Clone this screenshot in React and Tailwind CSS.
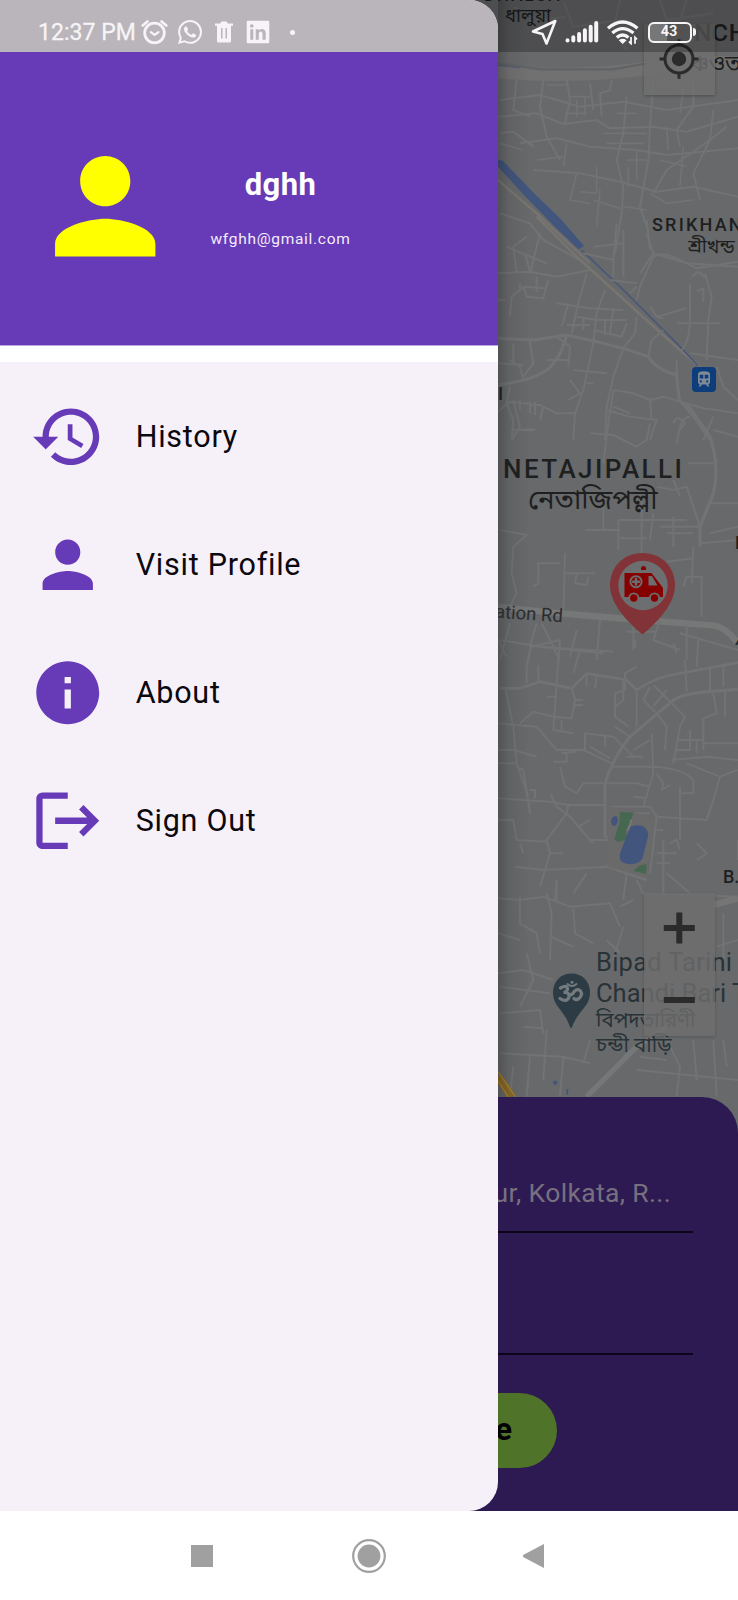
import React from "react";

const cx = "absolute leading-none whitespace-nowrap";

function MapCanvas() {
  return (
    <svg className="absolute inset-0" width="738" height="1140" viewBox="0 0 738 1140" fill="none">
      <defs>
        <linearGradient id="edge" x1="498" x2="530" y1="0" y2="0" gradientUnits="userSpaceOnUse">
          <stop offset="0" stopColor="#000" stopOpacity=".22" />
          <stop offset=".35" stopColor="#000" stopOpacity=".07" />
          <stop offset="1" stopColor="#000" stopOpacity="0" />
        </linearGradient>
      </defs>
      <rect width="738" height="1140" fill="#68696b" />

      <g transform="translate(480 0) scale(.33333)" stroke="#717374" strokeWidth="6" strokeLinejoin="round">
        <path d="M54 215 Q280 235 500 205 Q600 180 774 190" stroke="#717171" strokeWidth="40" />
        <path d="M54 190 L180 208 L400 208 L500 190" stroke="#616365" strokeWidth="7" />
        <path d="M54 196 L120 204" stroke="#4d5b73" strokeWidth="3" />
        <path d="M60 300 L180 285 L300 320 L430 305 L560 330 L774 300 M54 350 L170 340 L250 372 L350 360 L390 385 L520 380 L620 395 L774 350 M120 430 L230 415 L330 440 L470 450 L560 465 L774 445 M160 510 L300 520 L420 545 L530 575 L640 560 L774 590 M60 400 L100 395 L160 440" />
        <path d="M110 240 L100 330 L150 350 M190 240 L180 320 L200 410 L240 480 M260 235 L270 300 L255 370 M330 250 L340 330 M395 240 L390 270 L360 280 L365 350 M440 290 L430 400 L410 480 L430 560 L425 640 L405 760 M520 240 L510 380 L505 480 L480 620 L500 680 M640 240 L640 320 L590 390 M700 330 L690 420 L640 520 L660 600 M740 380 L690 420 L560 510 L520 580" />
        <path d="M200 255 H260 M270 290 H330 M255 340 H320 M290 300 V350 M315 290 V345 M410 340 H470 M370 400 H500 M380 430 H490 M440 480 H510 M445 500 V560 M470 450 V540 M350 500 V580 L300 575 M260 430 L250 500 M290 520 L270 600 L330 610 M340 600 L420 625 M360 570 L350 680 M170 480 L250 470 M60 430 L130 450 M540 250 L610 270 L600 340 M560 380 L565 450 M590 390 L600 440 M540 480 L620 500 M610 440 L600 560 M510 580 L560 610 L640 600 M430 620 L500 630" strokeWidth="5" />
        <path d="M100 20 L180 60 L260 50 M250 5 L280 80 L420 60 M420 0 L400 90 L440 150 M540 0 L560 60 L700 40 M620 0 L600 60" stroke="#6f7172" />
        <path d="M54 540 L170 640 L330 790" stroke="#787571" strokeWidth="7" />
        <path d="M54 500 L54 478 L70 484 L168 586 L240 655 L312 738 L296 748 L228 684 L138 592 Z" fill="#42557c" stroke="none" />
        <path d="M60 640 L150 670 L190 720 L300 780 M180 700 L150 820 M80 740 L200 790 M500 700 L520 760 L480 820 M520 760 L620 790 L774 800 M430 690 L430 830 M340 740 L430 730" />
      </g>

      <g transform="translate(490 220) scale(.33333)" stroke="#717374" strokeWidth="6" strokeLinejoin="round">
        <path d="M140 -10 L260 110 L480 310 L570 390 L630 440" stroke="#777571" strokeWidth="8" />
        <path d="M275 90 L400 210 L490 300 L560 370 L625 438" stroke="#42557c" strokeWidth="4" />
        <path d="M24 355 L130 360 L230 345 L320 365 L400 385 L475 410 Q500 450 560 465 L568 540 L620 600 L660 660" strokeWidth="9" />
        <path d="M24 495 Q130 480 170 450 Q210 420 230 345" strokeWidth="9" />
        <path d="M24 160 L120 155 L200 170 L300 150 M80 155 L70 80 L110 50 M120 155 L105 100 M60 290 L65 230 L100 200 L165 205 M24 240 L45 240 M100 200 L110 230 L160 235 L175 180 M90 190 V215 M140 170 V215" />
        <path d="M200 250 L300 265 L400 270 M290 160 L265 250 L245 340 M345 210 L320 280 L310 370 L280 510 L255 580 L250 660 M235 250 L215 320 M260 290 L320 300 L410 300 M230 315 H300 M310 330 L395 350 L410 310 M280 290 V330 M345 300 V345 M370 270 L360 340 M440 290 L435 340 L400 385 L370 470 L350 560 L345 660" />
        <path d="M440 240 L450 200 L490 110 Q520 95 560 115 L620 145 L744 125 M480 90 L470 0 M380 10 L370 120 L280 100 M370 120 L370 170 M440 200 L420 220 M360 180 L440 190 M645 160 L665 230 L655 300 L650 420 M600 190 V290 Q600 370 570 395 M500 290 L590 265 M605 170 L625 155 L650 175 M480 260 L500 290 L520 295 M560 310 H690 M620 215 L640 205 V245 M475 410 L485 360 L520 330" />
        <path d="M24 430 L100 435 M70 370 V430 M120 365 L130 430 L100 470 M60 420 L90 440 L100 480 M170 420 H240 M200 350 L240 380 L235 440 M250 450 L350 460 M240 480 L270 520 L235 540 M290 490 H310 M24 575 L60 545 L150 555 L200 580 L255 580 M90 540 V570 M120 545 V580 M135 545 V585 M60 500 L50 550 L70 600 L65 660 M70 630 L135 628 M370 510 L430 520 L480 540 L520 530 L570 545 L640 565 L744 580 M480 540 L485 600 M560 420 V500 M680 440 L700 500 L744 540 M600 400 L744 420 M570 620 Q580 590 600 590 M350 570 L420 590 L500 600 L480 660 M670 590 L640 660" />
      </g>

      <g transform="translate(480 340) scale(.33333)" stroke="#717374" strokeWidth="6" strokeLinejoin="round">
        <path d="M620 190 L690 290 Q720 380 700 460 L660 560 L660 620" strokeWidth="10" />
        <path d="M100 180 L120 260 L95 300 M110 270 H165 M190 200 L180 240 M330 280 L400 285 L470 320 L500 300 L510 250 M370 370 L385 250 L400 150 M400 200 L450 220 M600 260 L590 310 M580 250 Q590 220 615 250 L600 270 M625 370 H700 M700 270 L774 290 M690 490 H774 M530 440 L580 450 L620 440 M580 420 L600 470" />
        <path d="M60 570 L140 585 L100 620 L95 700 L110 760 L90 800 M315 570 H420 M370 500 L370 570 M415 540 V630 M415 540 H620 M485 480 V640 M520 520 L510 600 M540 560 H660 M580 530 V620 M420 595 H500 M560 580 H640 M620 440 L660 560 M660 610 L774 600 M640 620 L635 730 M170 670 H240 M175 670 V730 L160 740 M255 640 L250 830 M250 700 H345 M290 700 L285 730 M285 730 L320 735 L325 710 M610 740 L620 710 H665 V830 M690 580 L774 560 M560 665 L640 655" />
        <path d="M54 800 Q180 815 300 825 L480 840 L700 856 Q735 860 770 905" stroke="#767777" strokeWidth="19" />
        <path d="M90 850 L60 960 M170 850 L150 920 M185 850 L240 960 M290 870 L270 950 M360 840 L350 960 M460 860 V930 M440 875 H530 M540 840 L520 900 L600 930 M620 860 V960 M60 900 L180 920 L400 935 M600 880 L774 930" />
      </g>

      <g transform="translate(490 640) scale(.33333)" stroke="#717374" strokeWidth="6" strokeLinejoin="round">
        <path d="M30 145 H90 L150 125 L245 145 L290 100 L410 120 L440 150 Q500 110 560 102 L744 68" strokeWidth="8" />
        <path d="M744 148 L650 155 Q560 165 545 185 L420 290 Q370 350 345 430 L345 590 L370 600 L355 680 L470 720" strokeWidth="9" />
        <path d="M24 0 L50 50 M110 80 L125 10 M125 20 L210 0 L200 130 L190 270 M150 20 L340 40 M270 30 L250 100 M45 140 L70 260 L80 370 L115 470 M24 250 L140 260 L200 330 L280 330 L365 370 M90 250 L130 215 L190 230 L245 235 L255 180 L245 145 M110 75 V130 M145 75 V125 M170 170 H200 M255 180 H280 M255 195 H280 M290 100 V140 M320 110 L315 145 M190 270 L250 280 M215 240 V270 M24 330 H70 L140 350 M24 370 H75 M80 380 L100 390 L120 520 M120 450 H135 V475 M285 280 L370 290 L430 350 M285 280 V330 M300 320 L360 355 M345 290 V320 M190 365 H230 V335 M215 340 L260 335" />
        <path d="M375 160 V230 L415 260 M375 160 L405 150 V100 L440 80 M440 150 V260 M400 120 V180 L375 200 M375 260 L420 290 M460 180 L500 220 L530 260 L525 330 M490 135 L550 195 L585 230 L570 260 L550 370 M480 140 L460 180 M490 200 L530 150 M585 60 L590 155 M625 0 L620 80 M435 0 V25 M550 10 L560 40 M660 80 V150 M700 75 V140 M670 160 L680 220 L640 235 V330 M705 155 V230 M485 280 L490 400 L460 500 M430 330 L480 300 M410 350 H460 M365 380 H490 M490 380 Q580 385 610 420 V460 H575 M565 300 H640 M560 330 H600 V270 M620 300 V340 M545 360 L650 350 L744 360 M640 310 H744 M590 370 L690 410 L744 390 M690 410 L670 480 L650 540 L500 530 M570 440 V600 M500 400 L520 430 L515 450 L540 435" />
        <path d="M24 475 L180 485 L235 495 L345 495 M180 460 L200 500 L240 530 L300 600 L360 600 M210 380 L225 440 L260 460 L280 430 H440 L480 440 M235 495 L230 520 L170 600 L180 640 L150 740 M24 540 H70 L80 600 L175 605 M75 680 L160 690 L355 680 M90 610 L100 640 M290 590 L310 610 M265 560 L300 540 M350 500 H480 L500 530 L480 700 M430 470 L470 475 M360 520 H480 M500 570 H520 M290 700 L250 760 M220 640 L180 640 M200 720 V780 M440 720 L460 760 L744 770 M410 700 L400 780 M520 600 V760 M500 640 H560 M500 670 H540 M540 610 L560 600 L570 630 M620 610 L650 640 L620 660 M530 700 L600 760 M744 600 V660 M280 680 L260 690" />
        <path d="M350 495 L495 535 L470 715 L355 680 Z" fill="#6b6a6a" stroke="none" />
        <path d="M390 515 L430 518 L424 540 L408 570 L410 596 Q380 612 373 598 L388 550 Z M430 692 L450 676 L470 672 L468 702 Z" fill="#466850" stroke="none" />
        <path d="M420 560 Q470 545 475 585 L458 655 Q440 680 405 670 Q385 665 390 640 Z M365 535 Q380 520 384 538 Q382 560 370 558 Q360 552 365 535 Z" fill="#42557c" stroke="none" />
        <path d="M424 538 Q422 555 413 572" stroke="#747776" strokeWidth="6" />
      </g>

      <g transform="translate(480 780) scale(.33333)" stroke="#717374" strokeWidth="6" strokeLinejoin="round">
        <path d="M54 355 L120 360 L190 350 L270 380 L390 370 L420 440 M120 350 V430 L170 460 L180 520 M200 340 L215 400 L210 540 M230 300 L225 360 M280 385 L285 460 L340 490 M54 580 L130 570 L220 600 M140 520 L160 600 L120 680 M60 620 L210 640 M60 700 L180 690 L190 760 M130 740 L190 745 M60 820 L250 830 L330 850 M200 750 L190 900 M330 780 L310 850 M100 860 L90 950 M150 830 L140 950 M250 830 L240 950 M380 480 L420 520 M420 380 L460 360 M54 460 L120 480 M210 470 L280 500 M430 440 L400 540" />
        <path d="M320 950 L470 800 L560 740" stroke="#757778" strokeWidth="16" />
        <path d="M700 375 L774 355" stroke="#757575" strokeWidth="20" />
        <path d="M550 760 L600 860 L590 950 M700 780 L710 950 M470 870 L774 900 M480 830 L560 840 M640 780 L650 900 M730 780 L740 860 M710 500 L774 480 M730 400 V540" />
        <path d="M54 890 L95 950" stroke="#8a6a26" strokeWidth="26" />
        <path d="M54 875 L106 950 M54 902 L84 950" stroke="#a1813a" strokeWidth="4" />
        <path d="M220 905 Q230 900 232 908 L224 914 Z M260 930 L264 928 L262 944 Z" fill="#42557c" stroke="#42557c" strokeWidth="3" />
      </g>
      <rect x="498" width="32" height="1140" fill="url(#edge)" />
    </svg>
  );
}

function TransitIcon() {
  return (
    <svg className="absolute left-[692px] top-[367px]" width="24" height="25" viewBox="0 0 24 25">
      <rect width="24" height="25" rx="4" fill="#0d3d7a" />
      <path fill="#7f8a96" fillRule="evenodd" d="M6 7.2C6 5 8 4.300 12 4.300S18 5 18 7.200V15c0 1.300-.8 2.200-1.800 2.400L17.500 19.500H15.500L14 17.500H10L8.500 19.500H6.500L7.800 17.400C6.800 17.200 6 16.300 6 15ZM7.700 7.800V11.600H11.300V7.800ZM12.700 7.800V11.600H16.300V7.800ZM8.800 13.300a1.100 1.100 0 1 0 .01 0ZM15.200 13.300a1.100 1.100 0 1 0 .01 0Z" />
    </svg>
  );
}

function AmbulancePin() {
  return (
    <svg className="absolute left-[609px] top-[552px]" width="67" height="83" viewBox="0 0 67 83">
      <path d="M33.500 1C14.500 1 1 15 1 33.500C1 44 7 55 15 64.500C22 72.500 28 78 33.500 82.500C39 78 45 72.500 52 64.500C60 55 66 44 66 33.500C66 15 52.500 1 33.500 1Z" fill="#823337" />
      <circle cx="34" cy="33.500" r="24.700" fill="#6d6e6f" />
      <g fill="#860000">
        <path d="M32 18v-1.500a2.500 2.500 0 0 1 5 0V18Z" />
        <path d="M15.500 21H42.500L51 32L54 36V45H15.500Z" />
      </g>
      <path d="M39.500 24H43L48.500 33.500H39.500Z" fill="#6d6e6f" />
      <circle cx="27" cy="29.700" r="5.600" fill="#860000" stroke="#6d6e6f" strokeWidth="1.900" />
      <path d="M27 25.800v7.800M23.100 29.700h7.800" stroke="#6d6e6f" strokeWidth="2.400" />
      <g fill="#860000" stroke="#6d6e6f" strokeWidth="1.800">
        <circle cx="24.800" cy="46" r="4.600" />
        <circle cx="45.500" cy="46" r="4.600" />
      </g>
    </svg>
  );
}

function TemplePin() {
  return (
    <svg className="absolute left-[552px] top-[973px]" width="39" height="56" viewBox="0 0 39 56">
      <path d="M19.500 .5C8.500 .5 1 8.500 1 19.500C1 34 12 36 18 54Q19 56 20 54C27 36 38 34 38 19.500C38 8.500 30.500 .5 19.500 .5Z" fill="#2c3b44" />
      <g stroke="#747b7f" strokeWidth="3.200" fill="none" strokeLinecap="round">
        <path d="M8.500 15Q15 11.500 15.500 15.500Q15.500 19 11.500 19.500Q18 19 17 24Q15 30 8 25.500" />
        <path d="M17 21.500Q20 22.500 21.500 19.500Q24.500 15 28 17.500Q31 20.500 28 24.500Q25 28 22 25.500" />
        <path d="M15.500 11Q20 15 24.500 11" strokeWidth="2" />
      </g>
      <circle cx="20" cy="9.300" r="1.500" fill="#747b7f" />
    </svg>
  );
}

function MapLabels() {
  return (
    <div className="font-[Roboto,'Noto_Sans_Bengali',sans-serif] text-[#1d1f20]">
      <span className={`${cx} left-[484px] top-[-13px] text-[17px] font-medium tracking-[2px]`}>DHALUA</span>
      <span className={`${cx} left-[505px] top-[7px] text-[18.5px]`}>ধালুয়া</span>
      <span className={`${cx} left-[694px] top-[21px] text-[24.5px] font-medium tracking-[0.7px]`}>NCH</span>
      <span className={`${cx} left-[690px] top-[53px] text-[22px]`}>ঞ্চওত</span>
      <span className={`${cx} left-[652px] top-[216px] text-[18px] font-medium tracking-[2.2px]`}>SRIKHAN</span>
      <span className={`${cx} left-[688px] top-[237px] text-[19px]`}>শ্রীখন্ড</span>
      <span className={`${cx} left-[498px] top-[385px] text-[18px] font-medium`}>I</span>
      <span className={`${cx} left-[503px] top-[456px] text-[26px] font-medium tracking-[2.450px]`}>NETAJIPALLI</span>
      <span className={`${cx} left-[528px] top-[486px] text-[27.5px]`}>নেতাজিপল্লী</span>
      <span className={`${cx} left-[735px] top-[534px] text-[18px] font-medium`}>N</span>
      <span className={`${cx} left-[736px] top-[630px] text-[18px] italic`}>A</span>
      <span className={`${cx} left-[495px] top-[605px] rotate-[4deg] text-[18.5px] text-[#2a2c2e]`}>ation Rd</span>
      <span className={`${cx} left-[723px] top-[868px] text-[18px] font-medium`}>B.</span>
      <span className={`${cx} left-[596px] top-[950px] text-[25.5px] tracking-[0.250px] text-[#283338]`}>Bipad Tarini</span>
      <span className={`${cx} left-[596px] top-[981px] text-[25.5px] text-[#283338]`}>Chandi Bari T</span>
      <span className={`${cx} left-[596px] top-[1010px] text-[20.5px] text-[#283338]`}>বিপদতারিণী</span>
      <span className={`${cx} left-[596px] top-[1035px] text-[20.5px] text-[#283338]`}>চন্ডী বাড়ি</span>
    </div>
  );
}

function MapControls() {
  return (
    <>
      <div className="absolute left-[644px] top-[24px] h-[71px] w-[71px] bg-[#6f6f6f]/80 shadow-[0_1px_3px_#0004]">
        <svg width="71" height="71" viewBox="0 0 71 71" fill="none" stroke="#2b2b2b" strokeWidth="3">
          <circle cx="35" cy="35" r="14" />
          <circle cx="35" cy="35" r="7.200" fill="#2b2b2b" stroke="none" />
          <path d="M35 15.300v6M35 48.800v6M15.500 35h6M48.500 35h6" />
        </svg>
      </div>
      <div className="absolute left-[644px] top-[893px] h-[143px] w-[71px] bg-[#6e6e6e]/80 shadow-[0_1px_3px_#0003]">
        <svg width="71" height="143" viewBox="0 0 71 143" stroke="#2b2b2b" strokeWidth="6">
          <path d="M35.300 19.500v31M19.800 35h31M19.800 107h31" />
        </svg>
      </div>
    </>
  );
}

function BookingSheet() {
  return (
    <section className="absolute inset-x-0 bottom-0 flex h-[414px] flex-col rounded-t-[36px] bg-[#2e1a52] px-[45px]">
      <div className="flex h-[136px] items-end justify-end border-b-[2px] border-[#0c0418] pr-[22px] pb-[22px] text-[26.5px] leading-[32px] tracking-[0.350px] text-[#77707f]">
        Narendrapur, Kolkata, R...
      </div>
      <div className="h-[122px] border-b-[2px] border-[#0c0418]" />
      <div className="mt-[38px] flex h-[75px] w-[376px] items-center justify-end self-center rounded-full bg-[#50732a] pr-[45px] text-[31px] font-bold text-black">
        Choose
      </div>
    </section>
  );
}

function StatusBar() {
  return (
    <div className="absolute inset-x-0 top-0 flex h-[52px] items-center pt-[12px] pl-[38px] text-[#f6f4f6]">
      <span className="w-[103px] text-[23px] leading-none whitespace-nowrap tracking-[0.050px] [-webkit-text-stroke:0.300px_currentColor]">12:37 PM</span>
      <svg width="27" height="26" viewBox="0 0 27 26" fill="none" stroke="currentColor" strokeLinecap="round">
        <circle cx="13.500" cy="14" r="9.800" strokeWidth="2.800" />
        <path d="M9.800 13.200L13.600 16L17.500 13.200" strokeWidth="2.200" />
        <path d="M1.700 6.500L6.500 2.500M25.300 6.500L20.500 2.500" strokeWidth="2.600" />
      </svg>
      <svg className="ml-[10px]" width="24" height="24" viewBox="0 0 24 24" fill="currentColor">
        <path d="M17.472 14.382c-.297-.149-1.758-.867-2.030-.967-.273-.099-.471-.148-.670.150-.197.297-.767.966-.940 1.164-.173.199-.347.223-.644.075-.297-.150-1.255-.463-2.390-1.475-.883-.788-1.480-1.761-1.653-2.059-.173-.297-.018-.458.130-.606.134-.133.298-.347.446-.520.149-.174.198-.298.298-.497.099-.198.050-.371-.025-.520-.075-.149-.669-1.612-.916-2.207-.242-.579-.487-.500-.669-.510-.173-.008-.371-.010-.570-.010-.198 0-.520.074-.792.372-.272.297-1.040 1.016-1.040 2.479 0 1.462 1.065 2.875 1.213 3.074.149.198 2.096 3.200 5.077 4.487.709.306 1.262.489 1.694.625.712.227 1.360.195 1.871.118.571-.085 1.758-.719 2.006-1.413.248-.694.248-1.289.173-1.413-.074-.124-.272-.198-.570-.347m-5.421 7.403h-.004a9.870 9.870 0 01-5.031-1.378l-.361-.214-3.741.982.998-3.648-.235-.374a9.860 9.860 0 01-1.510-5.260c.001-5.450 4.436-9.884 9.888-9.884 2.640 0 5.122 1.030 6.988 2.898a9.825 9.825 0 012.893 6.994c-.003 5.450-4.437 9.884-9.885 9.884m8.413-18.297A11.815 11.815 0 0012.050 0C5.495 0 .160 5.335.157 11.892c0 2.096.547 4.142 1.588 5.945L.057 24l6.305-1.654a11.882 11.882 0 005.683 1.448h.005c6.554 0 11.890-5.335 11.893-11.893a11.821 11.821 0 00-3.480-8.413z" />
      </svg>
      <svg className="ml-[12px]" width="20" height="22" viewBox="0 0 20 22" fill="currentColor">
        <path fillRule="evenodd" d="M1 2.500H6.500V1.500L7.500 .5H12.500L13.500 1.500V2.500H19V4.800H17V20Q17 21.500 15.500 21.500H4.500Q3 21.500 3 20V4.800H1ZM7 7V17.500H8.500V7ZM11.500 7V17.500H13V7Z" />
      </svg>
      <svg className="ml-[12px]" width="24" height="24" viewBox="0 0 24 24" fill="currentColor">
        <path fillRule="evenodd" d="M2 .7H22Q23.300 .7 23.300 2V22Q23.300 23.300 22 23.300H2Q.7 23.300 .7 22V2Q.7 .7 2 .7ZM4.300 9.200V19.700H7.300V9.200ZM5.800 4.200a1.750 1.750 0 1 0 .01 0ZM9.700 9.200V19.700H12.800V14Q12.800 11.500 14.700 11.500T16.500 14V19.700H19.700V13.500Q19.700 9 15.800 9Q13.700 9 12.800 10.500V9.200Z" />
      </svg>
      <span className="ml-[20px] h-[5px] w-[5px] rounded-full bg-current" />
      <svg className="ml-[235px]" width="28" height="27" viewBox="0 0 28 27" fill="none" stroke="currentColor" strokeWidth="2.600" strokeLinejoin="round">
        <path d="M25.300 2L16.500 24.500L12.500 15L3 12.500Z" />
      </svg>
      <svg className="ml-[7px]" width="34" height="24" viewBox="0 0 34 24" stroke="currentColor" strokeWidth="4" strokeLinecap="round">
        <path d="M2.500 20.300v.3M8.300 17.300v3.300M14.100 13.900v6.700M19.900 10.300v10.300M25.700 6.700v13.900M31.200 3v17.600" />
      </svg>
      <svg className="ml-[8px]" width="32" height="25" viewBox="0 0 32 25" fill="none" stroke="currentColor" strokeWidth="3.300">
        <path d="M1 8.300Q15.500 -4.300 30.500 8.300M5.300 13Q15.500 4.300 26.500 13M9.800 17.500Q15.500 12.500 21.500 17.500" />
        <path d="M15.700 24L11.800 20.200Q15.700 17.500 19.600 20.200Z" fill="currentColor" stroke="none" />
        <path d="M24 17v6.500l-2-2M28 23.800v-6.500l2 2" strokeWidth="1.800" />
      </svg>
      <div className="ml-[9px] flex h-[21px] w-[44px] items-center justify-center rounded-[6px] border-[2.500px] border-current bg-[linear-gradient(90deg,#777_43%,transparent_43%)] pt-[1px] pr-[2px] text-[14.5px] leading-none font-bold">43</div>
      <span className="ml-[1px] h-[8px] w-[3px] rounded-r bg-current" />
    </div>
  );
}

const items = [
  {
    label: "History",
    d: "M13 3c-4.970 0-9 4.030-9 9H1l3.890 3.890.070.140L9 12H6c0-3.870 3.130-7 7-7s7 3.130 7 7-3.130 7-7 7c-1.930 0-3.680-.790-4.940-2.060l-1.420 1.420C8.270 19.990 10.510 21 13 21c4.970 0 9-4.030 9-9s-4.030-9-9-9zm-1 5v5l4.280 2.540.720-1.210-3.500-2.080V8H12z",
  },
  {
    label: "Visit Profile",
    d: "M12 12c2.210 0 4-1.790 4-4s-1.790-4-4-4-4 1.790-4 4 1.790 4 4 4zm0 2c-2.670 0-8 1.340-8 4v2h16v-2c0-2.660-5.330-4-8-4z",
  },
  {
    label: "About",
    d: "M12 2C6.480 2 2 6.480 2 12s4.480 10 10 10 10-4.480 10-10S17.520 2 12 2zm1 15h-2v-6h2v6zm0-8h-2V7h2v2z",
  },
  {
    label: "Sign Out",
    d: "M17 7l-1.410 1.410L18.170 11H8v2h10.170l-2.580 2.580L17 17l5-5zM4 5h8V3H4c-1.100 0-2 .900-2 2v14c0 1.100.900 2 2 2h8v-2H4V5z",
  },
];

function Drawer() {
  return (
    <aside className="absolute top-0 left-0 flex h-[1511px] w-[498px] flex-col overflow-hidden rounded-r-[29px] bg-[#f6f1f9]">
      <div className="h-[52px] bg-[#b9b5ba]" />
      <header className="flex h-[294px] border-b border-[#b9a5df] bg-[#673ab7]">
        <svg className="mt-[79px] ml-[30px]" width="150.500" height="150.500" viewBox="0 0 24 24" fill="#ffff00">
          <path d={items[1].d} />
        </svg>
        <div className="ml-[20px] flex w-[160px] flex-col items-center pt-[115px] text-white">
          <div className="text-[31px] leading-[36px] font-bold tracking-[0.400px]">dghh</div>
          <div className="mt-[26px] text-[15.5px] leading-[20px] tracking-[0.700px] text-[#f3edfb]">wfghh@gmail.com</div>
        </div>
      </header>
      <div className="h-[16px] bg-white" />
      <nav className="flex flex-col pt-[11px]">
        {items.map((it) => (
          <div key={it.label} className="flex h-[128px] items-center gap-[30.5px] pl-[29.700px]">
            <svg width="75.500" height="75.500" viewBox="0 0 24 24" fill="#673ab7">
              <path d={it.d} />
            </svg>
            <span className="text-[30.5px] leading-none tracking-[0.750px] text-[#0b080e]">{it.label}</span>
          </div>
        ))}
      </nav>
    </aside>
  );
}

function SystemNav() {
  return (
    <div className="flex h-[89px] items-center bg-white pl-[191px]">
      <span className="h-[22px] w-[22px] bg-[#a0a0a0]" />
      <svg className="ml-[139px]" width="34" height="34" viewBox="0 0 34 34">
        <circle cx="17" cy="17" r="15.800" fill="none" stroke="#a0a0a0" strokeWidth="2.200" />
        <circle cx="17" cy="17" r="11.400" fill="#a0a0a0" />
      </svg>
      <svg className="ml-[136px]" width="22" height="26" viewBox="0 0 22 26">
        <path d="M22 1V25L1.500 14.300Q0 13 1.500 11.700Z" fill="#a0a0a0" />
      </svg>
    </div>
  );
}

export default function App() {
  return (
    <div className="flex h-[1600px] w-[738px] flex-col overflow-hidden bg-white font-[Roboto,sans-serif]">
      <main className="relative h-[1511px] shrink-0 overflow-hidden">
        <MapCanvas />
        <MapLabels />
        <TransitIcon />
        <AmbulancePin />
        <TemplePin />
        <MapControls />
        <BookingSheet />
        <div className="absolute inset-x-0 top-0 h-[52px] bg-black/25" />
        <Drawer />
        <StatusBar />
      </main>
      <SystemNav />
    </div>
  );
}
